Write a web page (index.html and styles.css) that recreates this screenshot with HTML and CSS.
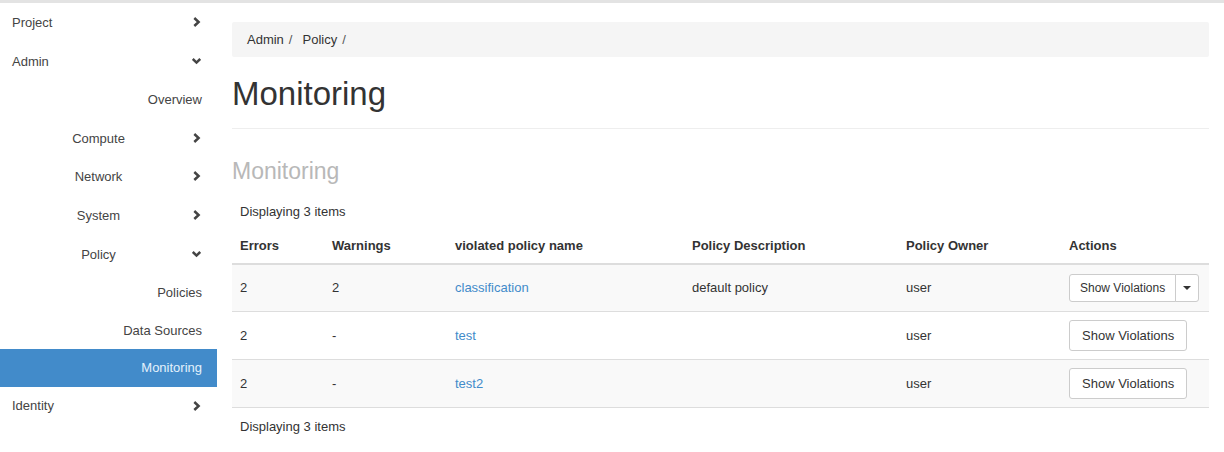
FILE: index.html
```html
<!DOCTYPE html>
<html>
<head>
<meta charset="utf-8">
<link rel="stylesheet" href="styles.css">
</head>
<body>
<div class="topbar"></div>
<div class="layout">
  <nav class="sidebar">
    <div class="item top"><span class="label">Project</span><svg class="chev" width="9" height="10" viewBox="0 0 9 10"><path d="M2.3 1 L6.6 5 L2.3 9" /></svg></div>
    <div class="item top tall"><span class="label">Admin</span><svg class="chev" width="9" height="10" viewBox="0 0 9 10"><path d="M0.8 3 L4.5 6.6 L8.2 3" /></svg></div>
    <div class="item leaf">Overview</div>
    <div class="item group mid"><span class="label">Compute</span><svg class="chev" width="9" height="10" viewBox="0 0 9 10"><path d="M2.3 1 L6.6 5 L2.3 9" /></svg></div>
    <div class="item group"><span class="label">Network</span><svg class="chev" width="9" height="10" viewBox="0 0 9 10"><path d="M2.3 1 L6.6 5 L2.3 9" /></svg></div>
    <div class="item group tall"><span class="label">System</span><svg class="chev" width="9" height="10" viewBox="0 0 9 10"><path d="M2.3 1 L6.6 5 L2.3 9" /></svg></div>
    <div class="item group tall"><span class="label">Policy</span><svg class="chev" width="9" height="10" viewBox="0 0 9 10"><path d="M0.8 3 L4.5 6.6 L8.2 3" /></svg></div>
    <div class="item leaf mid">Policies</div>
    <div class="item leaf short">Data Sources</div>
    <div class="item leaf short active">Monitoring</div>
    <div class="item top mid"><span class="label">Identity</span><svg class="chev" width="9" height="10" viewBox="0 0 9 10"><path d="M2.3 1 L6.6 5 L2.3 9" /></svg></div>
  </nav>
  <main class="content">
    <div class="breadcrumb">
      <span class="crumb">Admin</span><span class="sep">/</span>
      <span class="crumb">Policy</span><span class="sep">/</span>
    </div>
    <h1 class="page-title">Monitoring</h1>
    <h2 class="table-title">Monitoring</h2>
    <div class="count">Displaying 3 items</div>
    <table class="data">
      <colgroup>
        <col class="c1"><col class="c2"><col class="c3"><col class="c4"><col class="c5"><col class="c6">
      </colgroup>
      <thead>
        <tr>
          <th>Errors</th><th>Warnings</th><th>violated policy name</th><th>Policy Description</th><th>Policy Owner</th><th>Actions</th>
        </tr>
      </thead>
      <tbody>
        <tr class="odd">
          <td>2</td><td>2</td><td><a class="link">classification</a></td><td>default policy</td><td>user</td>
          <td><div class="btn-group"><button class="btn btn-sm">Show Violations</button><button class="btn btn-sm toggle"><span class="caret"></span></button></div></td>
        </tr>
        <tr>
          <td>2</td><td>-</td><td><a class="link">test</a></td><td></td><td>user</td>
          <td><button class="btn">Show Violations</button></td>
        </tr>
        <tr class="odd">
          <td>2</td><td>-</td><td><a class="link">test2</a></td><td></td><td>user</td>
          <td><button class="btn">Show Violations</button></td>
        </tr>
      </tbody>
    </table>
    <div class="count footer">Displaying 3 items</div>
  </main>
</div>
</body>
</html>
```
FILE: styles.css
```css
* { box-sizing: border-box; }
html, body { margin: 0; padding: 0; background: #fff; }
body {
  font-family: "Liberation Sans", Arial, sans-serif;
  font-size: 13px;
  color: #333;
  line-height: 19px;
}
.topbar { height: 3px; background: #e3e3e3; }
.layout { display: flex; align-items: flex-start; }

.sidebar { width: 217px; flex: none; }
.item {
  height: 38.5px;
  display: grid;
  align-items: center;
  color: #444;
}
.item.tall { height: 39px; }
.item.mid { height: 38px; }
.item.short { height: 37.5px; }
.item.top {
  grid-template-columns: 1fr 9px;
  padding: 0 16px 0 12px;
}
.item.group {
  grid-template-columns: 1fr 9px;
  padding: 0 16px 0 5px;
  text-align: center;
}
.item.leaf {
  text-align: right;
  padding-right: 15px;
  grid-template-columns: 1fr;
}
.item.active { background: #428bca; color: #e3f1fc; }
.chev { display: block; }
.chev path { fill: none; stroke: #444; stroke-width: 2.5; stroke-linecap: butt; stroke-linejoin: miter; }

.content { flex: 1; padding: 19px 15px 0 15px; min-width: 0; }
.breadcrumb {
  background: #f5f5f5;
  padding: 8px 15px;
  line-height: 19px;
  border-radius: 2px;
  display: flex;
}
.crumb { color: #333; }
.sep { color: #555; padding: 0 10px 0 5px; }

.page-title {
  margin: 18px 0 0;
  font-size: 33px;
  font-weight: normal;
  line-height: 37px;
  padding-bottom: 16px;
  border-bottom: 1px solid #eee;
  color: #333;
}
.table-title {
  margin: 30px 0 0;
  font-size: 23px;
  font-weight: normal;
  line-height: 25px;
  color: #b8b8b8;
}
.count { margin-top: 18px; padding-left: 8px; }
.count.footer { margin-top: 9px; }

.data {
  margin-top: 8px;
  width: 100%;
  border-collapse: collapse;
  table-layout: fixed;
}
.c1 { width: 92px; }
.c2 { width: 123px; }
.c3 { width: 237px; }
.c4 { width: 214px; }
.c5 { width: 163px; }
.c6 { width: auto; }
.data th {
  text-align: left;
  font-weight: bold;
  padding: 8px;
  line-height: 18px;
  border-bottom: 2px solid #ddd;
}
.data td {
  padding: 8px;
  height: 47px;
  vertical-align: middle;
  border-bottom: 1px solid #ddd;
}
.data tr.odd td { background: #f9f9f9; }
.link { color: #428bca; text-decoration: none; }

.btn {
  font-family: inherit;
  font-size: 13px;
  line-height: 19px;
  padding: 5px 12px;
  border: 1px solid #ccc;
  border-radius: 3px;
  background: #fff;
  color: #333;
  display: inline-block;
}
.btn-group { display: inline-flex; }
.btn-sm {
  font-size: 12px;
  line-height: 16px;
  padding: 5px 10px;
  border-radius: 3px 0 0 3px;
}
.btn-sm.toggle {
  margin-left: -1px;
  padding: 5px 7px;
  border-radius: 0 3px 3px 0;
  display: inline-flex;
  align-items: center;
}
.caret {
  display: block;
  width: 0; height: 0;
  border-top: 4px solid #333;
  border-left: 4px solid transparent;
  border-right: 4px solid transparent;
}
```
